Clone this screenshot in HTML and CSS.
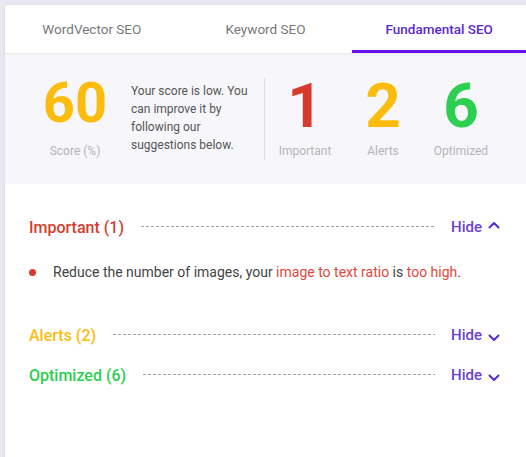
FILE: index.html
```html
<!DOCTYPE html>
<html>
<head>
<meta charset="utf-8">
<link rel="stylesheet" href="styles.css">
</head>
<body>
<div class="card">
  <nav class="tabs">
    <div class="tab">WordVector SEO</div>
    <div class="tab">Keyword SEO</div>
    <div class="tab active">Fundamental SEO</div>
  </nav>
  <section class="stats">
    <div class="score">
      <div class="score-num">60</div>
      <div class="label">Score (%)</div>
    </div>
    <p class="summary">Your score is low. You can improve it by following our suggestions below.</p>
    <div class="divider"></div>
    <div class="stat">
      <div class="stat-num red">1</div>
      <div class="label">Important</div>
    </div>
    <div class="stat">
      <div class="stat-num yellow">2</div>
      <div class="label">Alerts</div>
    </div>
    <div class="stat">
      <div class="stat-num green">6</div>
      <div class="label">Optimized</div>
    </div>
  </section>
  <section class="groups">
    <div class="group">
      <div class="group-head">
        <span class="group-title red">Important (1)</span>
        <span class="dash"></span>
        <span class="toggle">Hide
          <svg class="chev up" width="12" height="8" viewBox="0 0 12 8"><path d="M1.5 6.5L6 2l4.5 4.5" fill="none" stroke="currentColor" stroke-width="2" stroke-linecap="round" stroke-linejoin="round"/></svg>
        </span>
      </div>
      <ul class="items">
        <li class="item"><span class="dot"></span><span>Reduce the number of images, your <span class="hl">image to text ratio</span> is <span class="hl">too high</span>.</span></li>
      </ul>
    </div>
    <div class="group">
      <div class="group-head">
        <span class="group-title yellow">Alerts (2)</span>
        <span class="dash"></span>
        <span class="toggle">Hide
          <svg class="chev down" width="12" height="8" viewBox="0 0 12 8"><path d="M1.5 1.5L6 6l4.5-4.5" fill="none" stroke="currentColor" stroke-width="2" stroke-linecap="round" stroke-linejoin="round"/></svg>
        </span>
      </div>
    </div>
    <div class="group">
      <div class="group-head">
        <span class="group-title green">Optimized (6)</span>
        <span class="dash"></span>
        <span class="toggle">Hide
          <svg class="chev down" width="12" height="8" viewBox="0 0 12 8"><path d="M1.5 1.5L6 6l4.5-4.5" fill="none" stroke="currentColor" stroke-width="2" stroke-linecap="round" stroke-linejoin="round"/></svg>
        </span>
      </div>
    </div>
  </section>
</div>
</body>
</html>
```
FILE: styles.css
```css
* { box-sizing: border-box; }
html, body { margin: 0; padding: 0; }
body {
  background: #e8e8f3;
  font-family: Roboto, "Liberation Sans", sans-serif;
  overflow: hidden;
}
.card {
  margin: 5px 0 0 5px;
  background: #fff;
  border-radius: 4px 0 0 0;
  min-height: 470px;
  box-shadow: 0 0 2px rgba(60, 60, 120, 0.15);
  overflow: hidden;
}
.tabs {
  display: grid;
  grid-template-columns: 1fr 1fr 1fr;
  height: 48px;
  position: relative;
  z-index: 1;
  background: #fff;
  box-shadow: 0 1px 3px rgba(0, 0, 0, 0.08);
}
.tab {
  display: flex;
  align-items: center;
  justify-content: center;
  font-size: 13.5px;
  color: #787878;
  border-bottom: 3px solid transparent;
  padding-top: 3px;
}
.tab.active {
  color: #5a28d2;
  font-weight: 500;
  border-bottom-color: #6a10f0;
}
.stats {
  background: #f7f7fb;
  height: 131px;
  display: flex;
  align-items: flex-start;
  padding-left: 20px;
}
.score {
  width: 100px;
  padding-top: 20px;
  display: flex;
  flex-direction: column;
  align-items: center;
}
.score-num {
  font-size: 56px;
  line-height: 60px;
  font-weight: 700;
  color: #fbbc0e;
  margin-bottom: 10px;
}
.label {
  font-size: 12px;
  line-height: 16px;
  color: #b4b4b8;
}
.summary {
  margin: 29px 0 0 6px;
  width: 122px;
  font-size: 12px;
  line-height: 18px;
  color: #555;
}
.divider {
  width: 1px;
  height: 82px;
  margin: 25px 1px 0 11px;
  background: #dcdce2;
}
.stat {
  width: 78px;
  padding-top: 23px;
  display: flex;
  flex-direction: column;
  align-items: center;
}
.stat-num {
  font-size: 62px;
  line-height: 60px;
  font-weight: 700;
  margin-bottom: 7px;
}
.red { color: #d63b2e; }
.yellow { color: #fbbc0e; }
.green { color: #2ccf50; }
.groups {
  padding: 31px 26px 0 24px;
}
.group { margin-bottom: 16px; }
.group-head {
  display: flex;
  align-items: center;
  height: 24px;
}
.group-title {
  font-size: 16px;
  font-weight: 500;
}
.dash {
  flex: 1;
  height: 1px;
  margin: 0 16px 1px 17px;
  background: repeating-linear-gradient(to right, #a0a0a0 0 3px, transparent 3px 5px);
}
.toggle {
  display: flex;
  align-items: center;
  font-size: 15px;
  font-weight: 500;
  color: #6a3fd2;
}
.chev { margin-left: 6px; color: #5a2ad0; }
.chev.up { margin-top: -4px; }
.chev.down { margin-top: 6px; }
.items {
  list-style: none;
  margin: 23px 0 41px;
  padding: 0;
}
.item {
  display: flex;
  align-items: center;
  font-size: 14px;
  line-height: 20px;
  color: #444;
}
.dot {
  width: 7px;
  height: 7px;
  border-radius: 50%;
  background: #d63b2e;
  margin: 1px 17px 0 0;
  flex: none;
}
.hl { color: #e2473b; }
```
